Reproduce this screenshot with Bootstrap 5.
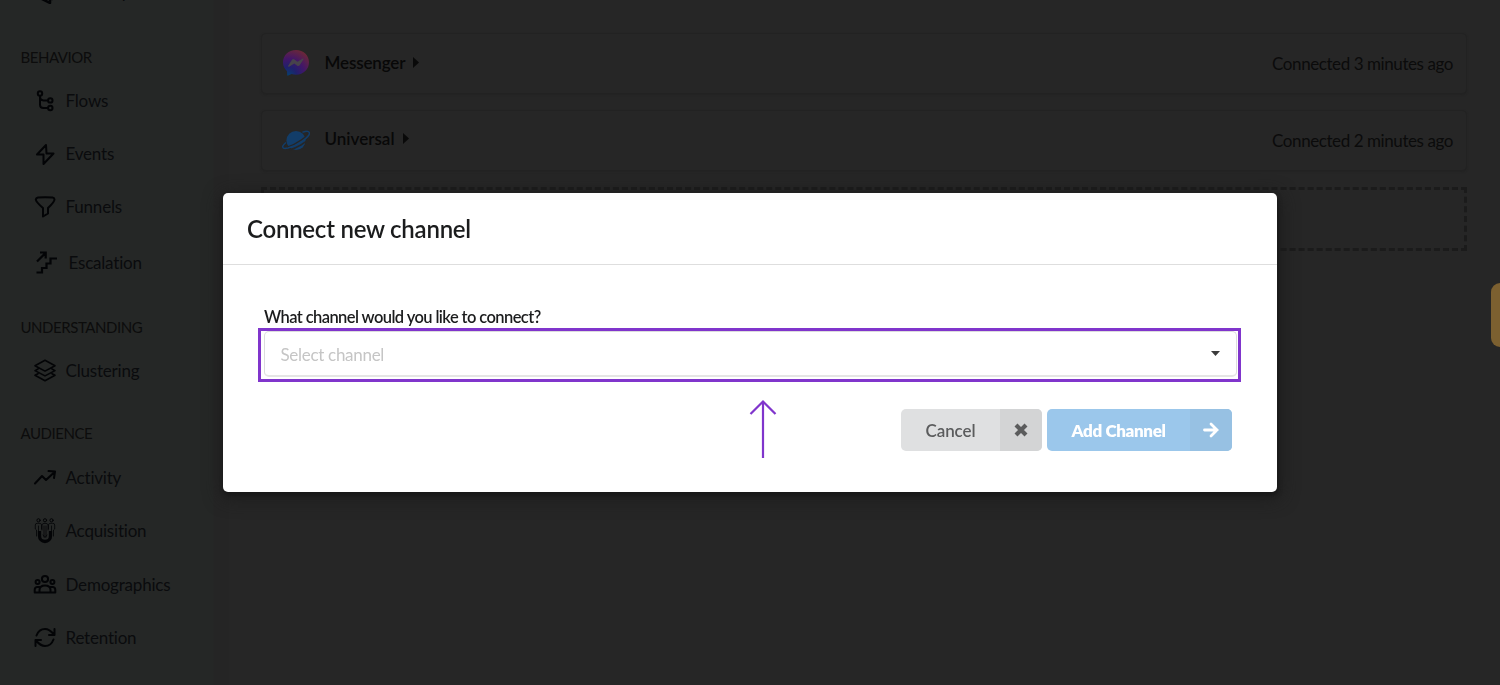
<!DOCTYPE html>
<html lang="en">
<head>
<meta charset="utf-8">
<meta name="viewport" content="width=device-width, initial-scale=1">
<title>Connect new channel</title>
<link href="https://cdn.jsdelivr.net/npm/bootstrap@5.3.0/dist/css/bootstrap.min.css" rel="stylesheet">
<style>
body{font-family:Lato,"Liberation Sans",sans-serif;font-size:17px;line-height:24px;background:#262626;color:#0b0b0b;height:685px;font-variant-ligatures:none}
svg{display:block;flex:none}
.side{width:230px;background:linear-gradient(90deg,#252726 0 213px,#252525 214px 228px,#262626 230px);color:#0a0b0d;letter-spacing:-.2px}
.side-head{font-size:15px;height:24px;padding-left:20.5px;color:#0c0c0c;letter-spacing:-.45px;position:relative}
.side-link{height:24px;margin-bottom:29.4px;padding-left:33px;gap:8.500px;color:inherit}
.side-link svg{width:24px;height:24px;fill:none;stroke:#030406;stroke-width:2;stroke-linecap:round;stroke-linejoin:round}
.main-area{padding:33px 33px 0 31px}
.channel{height:61px;border:1px solid #222;border-radius:5px;box-shadow:0 1px 2px #222;margin-bottom:16px;padding:0 13px 0 20px;background:#262626}
.channel-name{font-weight:600;margin-left:14.500px;color:#080808;letter-spacing:-.15px;padding-bottom:2px}
.channel-icon{margin-top:-1px}
.channel-time{letter-spacing:-.42px}
.add-box{height:64px;border:3px dashed #1b1b1b}
.tab-handle{right:0;top:283px;width:9px;height:64px;border-radius:9px 0 0 9px;background:#7c6030}
.modal-dialog{max-width:1054px;margin:0 auto}
.modal-content{border:0;border-radius:5px;box-shadow:1px 3px 4px #181818,1px 4px 18px 2px #1c1c1c;height:299px;color:#1b1c1d}
.modal-header{height:72px;padding:0 24px;border-bottom:1px solid #dedede}
.modal-title{font-size:24px;font-weight:600;line-height:30px;letter-spacing:-.24px}
.modal-body{padding:40px 36px 0 35px}
.field-label{font-size:16.500px;font-weight:600;padding-left:6px;padding-top:1px;height:23px;line-height:23px;letter-spacing:-.59px}
.highlight{height:54px;border:3px solid #8035cc;padding:0 1px 2px 3px}
.picker{height:46px;border:1px solid #dcdcdd;border-radius:5px;padding:0 16px 0 15.500px;color:#c5c5c5;border-bottom-width:2px;border-bottom-color:#e5e5e5;letter-spacing:-.3px}
.picker span{padding-top:2px}
.actions{margin-right:9px;gap:5px;padding-top:27px}
.act{height:42px;border:0;border-radius:5px;padding:0;font-size:17px;overflow:hidden;letter-spacing:-.1px}
.act-text{width:99px;text-align:center;padding-top:1px}
.act-icon{width:42px}
.act-cancel,.act-cancel:hover{background:#dfe0e1;color:#5b5c5d;font-weight:600}
.act-cancel .act-icon{background:#d3d4d5}
.act-add,.act-add:hover{background:#9bc7eb;color:#fff;font-weight:800;letter-spacing:-.35px}
.act-add .act-text{width:143px}
.act-add .act-icon{background:#97c1e3}
.pointer-arrow{left:526px;top:206px}
</style>
</head>
<body class="overflow-hidden position-relative">
<div class="d-flex h-100">
 <nav class="side flex-shrink-0 h-100 overflow-hidden">
  <a class="side-link d-flex align-items-center text-decoration-none" style="margin-top:-20px;margin-bottom:41px"><svg viewBox="0 0 24 24"><path d="M5 3h14v16l-5-3H5zM8 18.500l9 4.500v-5" stroke-width="2.500"/></svg><span>Transcripts</span></a>
  <div class="side-head" style="margin-bottom:20px">BEHAVIOR</div>
  <a class="side-link d-flex align-items-center text-decoration-none"><svg viewBox="0 0 24 24"><circle cx="7" cy="4.500" r="2.200"/><circle cx="17.300" cy="11.400" r="2.200"/><circle cx="17.300" cy="19" r="2.200"/><path d="M7 7v8.500q0 3.500 3.500 3.500H15M7 8q0 3.400 3.500 3.400H15"/></svg><span>Flows</span></a>
  <a class="side-link d-flex align-items-center text-decoration-none" style="margin-bottom:29px"><svg viewBox="0 0 24 24"><path d="M13 3 4 12.500h6.500v9.500L20.500 11.500H13.500z"/></svg><span>Events</span></a>
  <a class="side-link d-flex align-items-center text-decoration-none" style="margin-bottom:31.500px"><svg viewBox="0 0 24 24"><path d="M2.800 4.500Q3 3 5 2.600q7-.8 14.500 0 2 .4 2 1.900 0 2.300-6.500 8.500v5.500L10 21.500V13Q3 7 2.800 4.500z"/></svg><span>Funnels</span></a>
  <a class="side-link d-flex align-items-center text-decoration-none" style="margin-bottom:40px"><svg viewBox="0 0 27 24" style="width:27px;stroke-linecap:butt;stroke-linejoin:miter;stroke-width:2.200"><path d="M3.500 21.500h5.500v-4.500h4.500V12.500h4V7.500h6.500M4 10.500l8.500-8.500M7 1.500H12.700v6"/></svg><span>Escalation</span></a>
  <div class="side-head" style="margin-bottom:20px">UNDERSTANDING</div>
  <a class="side-link d-flex align-items-center text-decoration-none" style="margin-bottom:38.500px"><svg viewBox="0 0 24 24" style="stroke-width:1.600"><path d="m12 1.300 10 5.400-10 5.400L2 6.700zM5 10l-3 1.600 10 5.300 10-5.300-3-1.600M5 14.700l-3 1.600 10 5.400 10-5.400-3-1.600"/></svg><span>Clustering</span></a>
  <div class="side-head" style="margin-bottom:20.500px">AUDIENCE</div>
  <a class="side-link d-flex align-items-center text-decoration-none"><svg viewBox="0 0 24 24"><path d="m2 17.500 7-7.500 4 4L21 6.500M15.500 5l6.500.5-1 6.500"/></svg><span>Activity</span></a>
  <a class="side-link d-flex align-items-center text-decoration-none"><svg viewBox="0 0 24 26" style="height:26px;stroke-width:1"><circle cx="5.500" cy="2.300" r="1.600"/><circle cx="12" cy="2.300" r="1.600"/><circle cx="18.500" cy="2.300" r="1.600"/><path stroke-width=".8" d="M3.500 18v-6l-1.200-1V7q0-1.700 2-1.700H7l1.500 1V11M20.500 18v-6l1.200-1V7q0-1.700-2-1.700H17l-1.500 1V11M9 12V7q0-1.700 3-1.700T15 7v5M11 8v11M13 8v11M5.500 8v6M18.500 8v6M10 17l2 2.500 2-2.500"/><path stroke-width="3.300" stroke-linecap="butt" d="M6.500 13v5a5.500 5.500 0 0 0 11 0v-5"/></svg><span>Acquisition</span></a>
  <a class="side-link d-flex align-items-center text-decoration-none"><svg viewBox="0 0 24 24"><circle cx="12" cy="6" r="3.100"/><circle cx="4.600" cy="9" r="2"/><circle cx="19.400" cy="9" r="2"/><path d="M6.500 19.500V17q0-4.500 5.500-4.500t5.500 4.500v2.500zM7.500 14H4q-2.300.3-2.300 3v2.500h4.800M16.500 14H20q2.300.3 2.300 3v2.500h-4.800"/></svg><span>Demographics</span></a>
  <a class="side-link d-flex align-items-center text-decoration-none"><svg viewBox="0 0 24 24"><path d="M3.500 9.500C5 5.500 8 3 12 3c4 0 6.500 2.500 9 5.500M21.500 3V9H16M20.500 13.500C19 17.500 16 20 12 20c-4 0-6.500-2.500-9-5.500M2.500 20v-6H8"/></svg><span>Retention</span></a>
 </nav>
 <main class="main-area flex-grow-1">
  <div class="channel d-flex align-items-center"><svg class="channel-icon" width="28" height="28" viewBox="0 0 28 28"><defs><radialGradient id="mg" cx=".2" cy="1" r="1.100"><stop offset="0" stop-color="#06406f"/><stop offset=".3" stop-color="#20206c"/><stop offset=".6" stop-color="#421668"/><stop offset="1" stop-color="#6c2836"/></radialGradient></defs><path fill="url(#mg)" d="M14 1C6.500 1 1 6.300 1 13.300c0 3.700 1.500 6.700 4 8.900L5.200 26q.1 1 1 .6l3.500-1.500q2 .6 4.300.6c7.500 0 13-5.400 13-12.400S21.500 1 14 1z"/><path fill="#47434b" d="m6.200 16.800 3.800-6q1-1.300 2.500-.4l3 2.300 5.300-3.200q1.200-.4.700.8l-3.800 6q-1 1.300-2.400.4l-3-2.300L7 17.800q-1.200.3-.8-1z"/></svg><span class="channel-name">Messenger</span><svg class="ms-2" width="6" height="11" viewBox="0 0 6 11" style="margin-top:-3px"><path d="M0 0 6 5.500 0 11z" fill="#090909"/></svg><span class="channel-time ms-auto">Connected 3 minutes ago</span></div>
  <div class="channel d-flex align-items-center"><svg class="channel-icon" width="28" height="24" viewBox="0 0 28 24"><circle cx="14" cy="12.500" r="9.600" fill="#123d69"/><path d="M4 15.500C0 19 1 20.500 6 19C14 16.500 27 8 25 5" fill="none" stroke="#262626" stroke-width="1.800"/><path d="M4 14.500C-1 18.500-.5 21.500 6 20C15 17.500 29 8.500 27.300 4.500Q26.300 2.300 20.500 4.300" fill="none" stroke="#123d69" stroke-width="1.500"/><path d="M7 22C15 20 24 14.500 27 10.500" fill="none" stroke="#262626" stroke-width="1.500"/></svg><span class="channel-name" style="padding-bottom:3px;letter-spacing:0">Universal</span><svg class="ms-2" width="6" height="11" viewBox="0 0 6 11" style="margin-top:-4px"><path d="M0 0 6 5.500 0 11z" fill="#090909"/></svg><span class="channel-time ms-auto">Connected 2 minutes ago</span></div>
  <div class="add-box"></div>
 </main>
</div>
<div class="tab-handle position-absolute"></div>
<div class="modal d-block overflow-hidden" tabindex="-1" role="dialog">
 <div class="modal-dialog modal-dialog-centered h-100">
  <div class="modal-content">
   <div class="modal-header"><h1 class="modal-title">Connect new channel</h1></div>
   <div class="modal-body">
    <div class="field-label">What channel would you like to connect?</div>
    <div class="highlight"><div class="picker d-flex align-items-center justify-content-between"><span>Select channel</span><svg width="9" height="5" viewBox="0 0 9 5"><path d="M0 0h9L4.500 5z" fill="#3b3b3b"/></svg></div></div>
    <div class="actions d-flex justify-content-end">
     <button class="btn act act-cancel d-flex align-items-stretch"><span class="act-text align-self-center">Cancel</span><span class="act-icon d-flex align-items-center justify-content-center"><svg width="14" height="14" viewBox="0 0 14 14"><path d="m2 2 10 10m0-10-10 10" stroke="#5b5c5d" stroke-width="4.200"/></svg></span></button>
     <button class="btn act act-add d-flex align-items-stretch"><span class="act-text align-self-center">Add Channel</span><span class="act-icon d-flex align-items-center justify-content-center"><svg width="16" height="16" viewBox="0 0 16 16"><path d="M1.500 8H14M8 2l6 6-6 6" fill="none" stroke="#fff" stroke-width="2.800" stroke-linecap="round"/></svg></span></button>
    </div>
   </div>
   <svg class="pointer-arrow position-absolute" width="28" height="60" viewBox="0 0 28 60"><path d="M14 59V3M1.500 15 14 2.500 26.500 15" fill="none" stroke="#8035cc" stroke-width="2.200"/></svg>
  </div>
 </div>
</div>
<script src="https://cdn.jsdelivr.net/npm/bootstrap@5.3.0/dist/js/bootstrap.bundle.min.js"></script>
</body>
</html>
